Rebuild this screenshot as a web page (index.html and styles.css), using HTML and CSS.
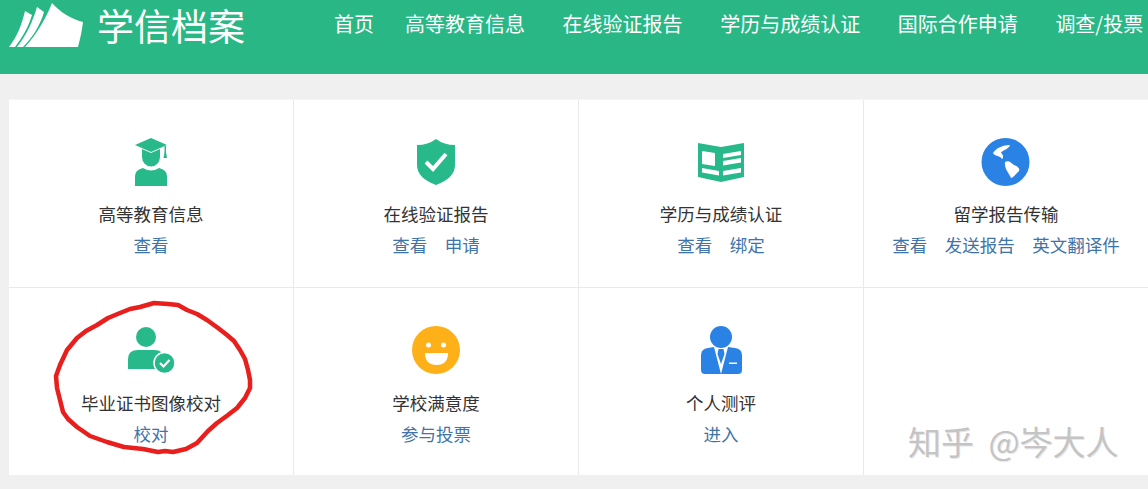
FILE: index.html
```html
<!DOCTYPE html>
<html lang="zh-CN">
<head>
<meta charset="utf-8">
<title>学信档案</title>
<link rel="stylesheet" href="styles.css">
</head>
<body>
<header class="topbar">
  <div class="brand">
    <svg class="brand-mark" viewBox="0 0 84 50" aria-hidden="true">
      <path fill="#fff" d="M9 47 C17 37 22 24 25 11 L32 15 C28 28 22 38 15 47Z"/>
      <path fill="#fff" d="M17 47 C26 36 33 21 37 7 L44 12 C40 26 32 38 23 47Z"/>
      <path fill="#fff" d="M25 47 C37 34 46 18 52 3 C60 12 71 19 83 22 C82 31 80 39 78 47Z"/>
    </svg>
    <span class="brand-name">学信档案</span>
  </div>
  <nav class="nav">
    <a class="nav-home">首页</a>
    <a>高等教育信息</a>
    <a>在线验证报告</a>
    <a>学历与成绩认证</a>
    <a>国际合作申请</a>
    <a>调查/投票</a>
  </nav>
</header>

<main class="board">
  <div class="grid">
    <section class="cell">
      <svg class="icon" viewBox="0 0 50 50" aria-hidden="true">
        <path class="green" d="M25 0 L41 7 L25 14 L9 7Z"/>
        <path class="green" d="M16 11 L25 15 L34 11 V19 A9 9.500 0 0 1 16 19Z"/>
        <path class="green" d="M38.500 8 H40 V14 L41 20 H37.500 L38.500 14Z"/>
        <path class="green" d="M9 48 V38 Q9 32 17 30 Q25 35 33 30 Q41 32 41 38 V48Z"/>
      </svg>
      <h2 class="title">高等教育信息</h2>
      <p class="links"><a>查看</a></p>
    </section>
    <section class="cell">
      <svg class="icon" viewBox="0 0 50 50" aria-hidden="true">
        <path class="green" d="M25 1 Q33 7 44 7 V27 Q44 40 25 47 Q6 40 6 27 V7 Q17 7 25 1Z"/>
        <path class="tick" d="M15 24 L22 31 L35 16"/>
      </svg>
      <h2 class="title">在线验证报告</h2>
      <p class="links"><a>查看</a><a>申请</a></p>
    </section>
    <section class="cell">
      <svg class="icon" viewBox="0 0 50 50" aria-hidden="true">
        <path class="green" d="M2 5 L25 9 L48 5 V39 L25 44 L2 39Z"/>
        <path class="white" d="M6 13 L19 15 V28 L6 26Z"/>
        <path class="white" d="M27 16 L45 13 V17 L27 20Z M27 23 L45 20 V24.500 L27 27.500Z M27 33 L45 30 V34.500 L27 37.500Z M6 30 L23 33 V37.500 L6 34.500Z"/>
      </svg>
      <h2 class="title">学历与成绩认证</h2>
      <p class="links"><a>查看</a><a>绑定</a></p>
    </section>
    <section class="cell">
      <svg class="icon" viewBox="0 0 50 50" aria-hidden="true">
        <circle class="blue" cx="24.500" cy="24" r="24"/>
        <path class="white" d="M29 7 C22 7 15 10 12 15 C14 19 19 17 21 21 C23 20 22 16 20 15 C21 12 27 12 29 7Z"/>
        <path class="white" d="M24 24 C28 22 30 25 33 27 C37 28 39 31 38 33 C35 36 32 40 30 40 C28 35 23 31 24 24Z"/>
      </svg>
      <h2 class="title">留学报告传输</h2>
      <p class="links"><a>查看</a><a>发送报告</a><a>英文翻译件</a></p>
    </section>
    <section class="cell">
      <svg class="icon" viewBox="0 0 50 50" aria-hidden="true">
        <circle class="green" cx="20" cy="11" r="10"/>
        <path class="green" d="M2 43 V33 Q2 24 12 24 H28 Q38 24 38 33 V43Z"/>
        <circle class="green badge" cx="38.500" cy="37" r="10.500"/>
        <path class="tick tick-small" d="M34 37 L37.500 40.500 L43.500 34"/>
      </svg>
      <h2 class="title">毕业证书图像校对</h2>
      <p class="links"><a>校对</a></p>
    </section>
    <section class="cell">
      <svg class="icon" viewBox="0 0 50 50" aria-hidden="true">
        <circle class="amber" cx="25" cy="24" r="24"/>
        <circle class="white" cx="17.500" cy="19" r="2.500"/>
        <circle class="white" cx="32.500" cy="19" r="2.500"/>
        <path class="white" d="M14 27 H37 Q37 39 25.500 39 Q14 39 14 27Z"/>
      </svg>
      <h2 class="title">学校满意度</h2>
      <p class="links"><a>参与投票</a></p>
    </section>
    <section class="cell">
      <svg class="icon" viewBox="0 0 50 50" aria-hidden="true">
        <circle class="blue" cx="25" cy="11" r="11"/>
        <path class="blue" d="M5 29 Q5 23 12 22 L18 21 L25 48 H9 Q5 48 5 44Z"/>
        <path class="blue" d="M46 29 Q46 23 39 22 L32 21 L25 48 H42 Q46 48 46 44Z"/>
        <path class="blue" d="M22.500 23 H27.500 L28.500 28 L25 38 L21.500 28Z"/>
        <rect class="white" x="33" y="36.500" width="8" height="1.500"/>
      </svg>
      <h2 class="title">个人测评</h2>
      <p class="links"><a>进入</a></p>
    </section>
    <section class="cell"></section>
  </div>
</main>

<svg class="scribble" viewBox="0 0 1148 489" aria-hidden="true">
  <path d="M168 304 L178 305 L187 310 L197 314 L207 320 L218 328 L227 335 L234 341 L240 350 L245 359 L248 370 L250 380 L250 388 L245 398 L237 408 L228 415 L217 423 L208 431 L197 443 L186 449 L173 452 L165 451 L158 452 L143 449 L124 447 L107 442 L90 436 L77 427 L68 419 L63 412 L60 400 L57 388 L56 376 L60 365 L67 350 L77 338 L86 331 L97 325 L108 318 L120 313 L130 309 L140 307 L154 303Z"/>
</svg>

<div class="watermark">知乎 @岑大人</div>
</body>
</html>
```
FILE: styles.css
```css
* { box-sizing: border-box; }

html, body {
  margin: 0;
  height: 100%;
  overflow: hidden;
}

body {
  position: relative;
  background: #f0f0f0;
  font-family: "Noto Sans CJK SC", "Liberation Sans", sans-serif;
}

.topbar {
  display: flex;
  align-items: center;
  height: 74px;
  padding: 0 0 24px 0;
  background: #29b885;
  color: #fff;
  white-space: nowrap;
}

.brand {
  display: flex;
  align-items: center;
  width: 334px;
  flex: none;
}

.brand-mark {
  display: block;
  width: 84px;
  height: 50px;
  flex: none;
}

.brand-name {
  margin-left: 13px;
  font-size: 37px;
  font-weight: 400;
  line-height: 50px;
}

.nav {
  display: flex;
  gap: 37.600px;
  margin-bottom: 2px;
  font-size: 20px;
  line-height: 50px;
}

.nav-home { margin-right: -6.600px; }

.board {
  padding: 25px 0 0 9px;
  overflow: hidden;
}

.grid {
  display: grid;
  grid-template-columns: repeat(4, 285px);
  grid-template-rows: 188px 187px;
  width: 1140px;
  background: #fff;
  border-top: 1px solid #f6f6f6;
}

.cell {
  padding-top: 38px;
  text-align: center;
  border-right: 1px solid #e9e9e9;
  border-bottom: 1px solid #e9e9e9;
}

.cell:nth-child(n+5) { border-bottom: 0; }
.cell:nth-child(n+5) .title { margin-top: 12px; }

.icon {
  display: block;
  width: 50px;
  height: 50px;
  margin: 0 auto;
}

.title {
  margin: 11px 0 0;
  font-size: 17.500px;
  font-weight: 400;
  line-height: 30px;
  color: #333;
}

.links {
  display: flex;
  justify-content: center;
  gap: 17.500px;
  margin: 1px 0 0;
  font-size: 17.500px;
  line-height: 30px;
  color: #3f74a8;
}

.green { fill: #27b98a; }
.blue { fill: #2a83e4; }
.amber { fill: #fdb018; }
.white { fill: #fff; }

.badge {
  stroke: #fff;
  stroke-width: 1.500;
}

.tick {
  fill: none;
  stroke: #fff;
  stroke-width: 4;
}

.tick-small { stroke-width: 2.200; }

.scribble {
  position: absolute;
  left: 0;
  top: 0;
  width: 1148px;
  height: 489px;
  pointer-events: none;
}

.scribble path {
  fill: none;
  stroke: #e81f1c;
  stroke-width: 4.500;
  stroke-linejoin: round;
}

.watermark {
  position: absolute;
  left: 908px;
  top: 417px;
  font-size: 33px;
  line-height: 48px;
  word-spacing: 7px;
  white-space: nowrap;
  color: #c4c4c4;
  text-shadow: 1px 1px 0 #e8e8e8;
}
```
